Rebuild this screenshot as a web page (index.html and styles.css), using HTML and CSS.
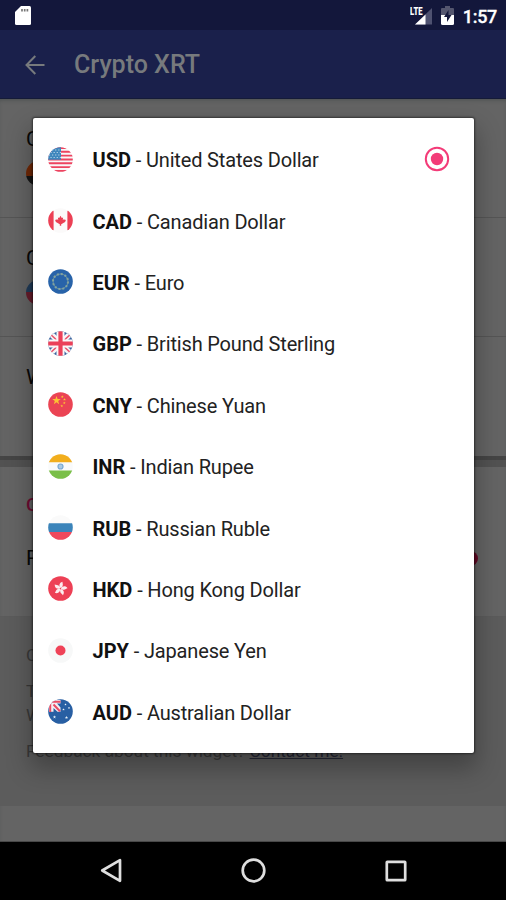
FILE: index.html
```html
<!DOCTYPE html>
<html lang="en">
<head>
<meta charset="utf-8">
<meta name="viewport" content="width=device-width, initial-scale=1">
<title>Crypto XRT</title>
<link rel="stylesheet" href="styles.css">
</head>
<body>
<div class="screen">
  <header class="status">
    <svg class="sd" width="17" height="20" viewBox="0 0 17 20"><path d="M6 0h8.500Q16 0 16 1.500V17.500Q16 19 14.500 19H1.500Q0 19 0 17.500V6z" fill="#fff"/><path d="M7 3v2.500M9.700 3v2.500M12.400 3v2.500" stroke="#777" stroke-width="1.700"/></svg>
    <div class="tray">
      <svg width="24" height="20" viewBox="0 0 24 20"><path d="M22 2V18.500H5z" fill="#4e5170"/><path d="M15.500 8.500V18.500H5z" fill="#fff"/><text class="lte" x="0" y="8.800" textLength="12.500" lengthAdjust="spacingAndGlyphs">LTE</text></svg>
      <svg class="battery" width="13" height="19" viewBox="0 0 13 19"><path d="M4 0h5v2h3q1 0 1 1v7H0V3q0-1 1-1h3z" fill="#54566f"/><path d="M0 9h13v8.500q0 1.500-1.500 1.500h-10Q0 19 0 17.500z" fill="#fff"/><path d="M7.500 4L3 11h3v5l4.500-7h-3z" fill="#13173b"/></svg>
      <span class="clock">1:57</span>
    </div>
  </header>
  <div class="appbar">
    <svg width="20" height="20" viewBox="0 0 20 20" fill="none" stroke="#777a7d" stroke-width="2"><path d="M19.500 10H2M10.300 1L1.500 10l8.800 9"/></svg>
    <h1>Crypto XRT</h1>
  </div>
  <main class="page">
    <section class="setting coin"><span class="label">C</span><i class="dot orange"></i></section>
    <section class="setting currency"><span class="label">C</span><i class="dot flag"></i></section>
    <section class="setting widget"><span class="label">W</span></section>
    <div class="band"></div>
    <section class="options"><span class="heading">C</span><div class="toggle"><span class="label">R</span><i class="knob"></i></div></section>
    <section class="about"><p class="first">C</p><p>T</p><p class="last">W</p><p class="feedback">Feedback about this widget? <u>Contact me!</u></p></section>
  </main>
  <nav class="nav">
    <svg width="22" height="25" viewBox="0 0 22 25"><path d="M20 2.200V22.800L2.200 12.500z"/></svg>
    <svg width="25" height="25" viewBox="0 0 25 25"><circle cx="12.500" cy="12.500" r="10.800"/></svg>
    <svg width="22" height="22" viewBox="0 0 22 22"><rect x="1.800" y="1.800" width="18.400" height="18.400" rx=".5"/></svg>
  </nav>

  <svg class="defs" width="0" height="0"><defs>
    <clipPath id="round"><circle cx="12.500" cy="12.500" r="12.300"/></clipPath>
    <path id="star" d="M0-1L.24-.32.95-.31.38.12.59.81 0 .4-.59.81-.38.12-.95-.31-.24-.32z"/>
  </defs></svg>

  <ul class="dialog">
    <li>
      <svg class="icon" viewBox="0 0 25 25"><g clip-path="url(#round)"><path fill="#f9f7f8" d="M0 0h25v25H0z"/><path stroke="#ed4460" stroke-width="1.900" d="M0 1h25M0 4.800h25M0 8.600h25M0 12.500h25M0 16.300h25M0 20.100h25M0 24h25"/><path fill="#3f86bd" d="M0 0h13v12.800H0z"/><path stroke="#c5ddec" stroke-width="1.100" stroke-dasharray="1.100 2" d="M1 3h12M2.500 5.500h10.500M1 8h12M2.500 10.500h10.500"/></g></svg>
      <span class="name"><b>USD</b> - United States Dollar</span>
      <svg class="radio" width="26" height="26" viewBox="0 0 26 26"><circle cx="13" cy="13" r="11.200" fill="none" stroke="#f33b78" stroke-width="2"/><circle cx="13" cy="13" r="6.200" fill="#f33b78"/></svg>
    </li>
    <li>
      <svg class="icon" viewBox="0 0 25 25"><g clip-path="url(#round)"><path fill="#fbfafa" d="M0 0h25v25H0z"/><path fill="#ec4055" d="M0 2.800h5.600v19.400H0zM19.400 2.800H25v19.400h-5.600z"/><path fill="#ec4055" d="M12.500 7.800l1.300 2.300 1.300-.6-.3 2.500 1.400-1 .5 1 1.300-.2-.9 2.100-3.900 2.300v1.600h-1.400v-1.600l-3.900-2.300-.9-2.100 1.300.2.500-1 1.400 1-.3-2.500 1.300.6z"/></g></svg>
      <span class="name"><b>CAD</b> - Canadian Dollar</span>
    </li>
    <li>
      <svg class="icon" viewBox="0 0 25 25"><circle cx="12.500" cy="12.500" r="12.300" fill="#2863a9"/><circle cx="12.500" cy="12.500" r="7.500" fill="none" stroke="#87a699" stroke-width="2" stroke-dasharray="2 1.927"/><circle cx="12.500" cy="12.500" r="7.500" fill="none" stroke="#7d9fa2" stroke-width=".8"/></svg>
      <span class="name"><b>EUR</b> - Euro</span>
    </li>
    <li>
      <svg class="icon" viewBox="0 0 25 25"><g clip-path="url(#round)"><path fill="#3b659f" d="M0 0h25v25H0z"/><path stroke="#f7f5f7" stroke-width="5.500" d="M0 0l25 25M25 0L0 25"/><path stroke="#ea526a" stroke-width="1.600" d="M1 2l23 21M24 2L1 23"/><path stroke="#faf7f8" stroke-width="8" d="M12.500 0v25M0 12.500h25"/><path stroke="#eb4059" stroke-width="4.200" d="M12.500 0v25M0 12.500h25"/></g></svg>
      <span class="name"><b>GBP</b> - British Pound Sterling</span>
    </li>
    <li>
      <svg class="icon" viewBox="0 0 25 25"><circle cx="12.500" cy="12.500" r="12.300" fill="#eb4454"/><g fill="#fbc333"><use href="#star" transform="translate(8.500 8.500) scale(4.500)"/><use href="#star" transform="translate(14.300 4.800) scale(1.500)"/><use href="#star" transform="translate(16.500 7.500) scale(1.500)"/><use href="#star" transform="translate(16.300 11) scale(1.500)"/><use href="#star" transform="translate(13.800 14) scale(1.500)"/></g></svg>
      <span class="name"><b>CNY</b> - Chinese Yuan</span>
    </li>
    <li>
      <svg class="icon" viewBox="0 0 25 25"><g clip-path="url(#round)"><path fill="#f9fafb" d="M0 0h25v25H0z"/><path fill="#f2ae1d" d="M0 0h25v8.300H0z"/><path fill="#7abf49" d="M0 16.500h25V25H0z"/><circle cx="12.500" cy="12.500" r="2.500" fill="#a9c9e4" stroke="#79a9d2" stroke-width="1.200"/></g></svg>
      <span class="name"><b>INR</b> - Indian Rupee</span>
    </li>
    <li>
      <svg class="icon" viewBox="0 0 25 25"><g clip-path="url(#round)"><path fill="#fafafa" d="M0 0h25v25H0z"/><path fill="#3b84ba" d="M0 8.300h25v8.700H0z"/><path fill="#ef495d" d="M0 17h25v8H0z"/></g></svg>
      <span class="name"><b>RUB</b> - Russian Ruble</span>
    </li>
    <li>
      <svg class="icon" viewBox="0 0 25 25"><circle cx="12.500" cy="12.500" r="12.300" fill="#ed4055"/><g fill="#fcebed" transform="translate(12.500 12.500) rotate(10)"><path id="petal" d="M0-.5C-2.200-2-2.500-5.500.8-7 .8-5.500 2.300-4.500 1.500-2.300 1.200-1.200.7-.8 0-.5z"/><use href="#petal" transform="rotate(72)"/><use href="#petal" transform="rotate(144)"/><use href="#petal" transform="rotate(216)"/><use href="#petal" transform="rotate(288)"/></g></svg>
      <span class="name"><b>HKD</b> - Hong Kong Dollar</span>
    </li>
    <li>
      <svg class="icon" viewBox="0 0 25 25"><circle cx="12.500" cy="12.500" r="12.300" fill="#f7f8f8"/><circle cx="12.500" cy="12.500" r="5" fill="#ef4257"/></svg>
      <span class="name"><b>JPY</b> - Japanese Yen</span>
    </li>
    <li>
      <svg class="icon" viewBox="0 0 25 25"><g clip-path="url(#round)"><path fill="#285fa3" d="M0 0h25v25H0z"/><path fill="#f5eef2" d="M1 1h11.500v3.500H9l3.500 4v4.300H9.500L5.500 9v3.800H1z"/><path fill="none" stroke="#ea4c64" stroke-width="2" d="M2.200 13V2.700h10.300M5.500 5.500l6.500 6.700"/><g fill="#e9f2f9"><use href="#star" transform="translate(6.500 18) scale(1.700)"/><use href="#star" transform="translate(17.500 5.500) scale(1.200)"/><use href="#star" transform="translate(15.500 10.500) scale(1.300)"/><use href="#star" transform="translate(21 9) scale(1.300)"/><use href="#star" transform="translate(18.500 18.500) scale(1.700)"/></g></g></svg>
      <span class="name"><b>AUD</b> - Australian Dollar</span>
    </li>
  </ul>
</div>
</body>
</html>
```
FILE: styles.css
```css
* { box-sizing: border-box; }
body { margin: 0; font-family: Roboto, "Liberation Sans", sans-serif; }
.screen { position: relative; width: 506px; height: 900px; overflow: hidden; background: #646464; display: flex; flex-direction: column; }
.status { flex: none; height: 30px; background: #13173b; display: flex; justify-content: space-between; align-items: flex-start; padding: 6px 9px 0 15px; }
.tray { display: flex; align-items: flex-start; }
.lte { font: 900 10.500px Roboto, sans-serif; fill: #fff; }
.battery { margin-left: 7px; }
.clock { margin-left: 9px; color: #fff; font-size: 18px; font-weight: 500; line-height: 21px; letter-spacing: -.3px; -webkit-text-stroke: .3px #fff; }
.appbar { flex: none; height: 69px; background: #1a204b; border-bottom: 1px solid #151b38; display: flex; align-items: center; padding: 2px 25px 0; gap: 29px; }
.appbar h1 { margin: 0; font-size: 25px; font-weight: 500; color: #777a7d; line-height: 30px; }
.page { flex: none; height: 743px; display: flex; flex-direction: column; border-bottom: 1px solid #484848; box-shadow: inset 0 3px 4px -2px #4b5050; }
.setting { flex: none; height: 119px; padding: 28px 26px 0; border-bottom: 1px solid #555; display: flex; flex-direction: column; gap: 9px; }
.setting.widget { height: 119px; border: 0; }
.label { font-size: 21px; line-height: 25px; color: #080808; }
.dot { width: 25px; height: 25px; border-radius: 50%; }
.orange { background: linear-gradient(#702806 60%, #151515 60%); }
.flag { background: linear-gradient(#203b58 50%, #661c2b 50%); }
.band { flex: none; height: 11px; background: #525252; border-top: 4px solid #454545; }
.options { flex: none; height: 150px; padding: 26px 26px 0; display: flex; flex-direction: column; gap: 29px; border-bottom: 1px solid #5b5b5b; }
.heading { color: #6e0b32; font-size: 19px; font-weight: 500; line-height: 24px; }
.toggle { display: flex; justify-content: space-between; align-items: center; }
.knob { width: 15px; height: 15px; border-radius: 50%; background: #650824; margin-right: 2px; }
.about { flex: none; height: 189px; background: #5c5c5c; padding: 26px 26px 0; font-size: 17.300px; line-height: 24px; color: #383838; }
.about p { margin: 0; }
.about .first { margin-bottom: 12px; }
.about .last { margin-bottom: 12px; }
.feedback u { color: #252736; }
.nav { flex: none; height: 59px; background: #000; display: flex; justify-content: center; align-items: center; gap: 119px; padding-bottom: 2px; }
.nav svg { fill: none; stroke: #dedede; stroke-width: 2.700; stroke-linejoin: round; }
.defs { position: absolute; }
.dialog { position: absolute; left: 33px; top: 118px; width: 441px; height: 634.500px; margin: 0; padding: 10.500px 24px 10px 15px; list-style: none; background: #fff; border-radius: 2px; box-shadow: 0 0 2px 1px rgba(0,0,0,.45), 0 13px 24px 3px rgba(0,0,0,.28); display: grid; grid-template-rows: repeat(10, 61.400px); }
.dialog li { display: flex; align-items: center; }
.icon { width: 25px; height: 25px; flex: none; }
.name { margin-left: 19.500px; font-size: 20px; letter-spacing: -.16px; line-height: 26px; color: #222; padding-top: 2px; white-space: nowrap; }
.name b { font-weight: 700; color: #111; letter-spacing: 0; }
.radio { margin-left: auto; }
```
